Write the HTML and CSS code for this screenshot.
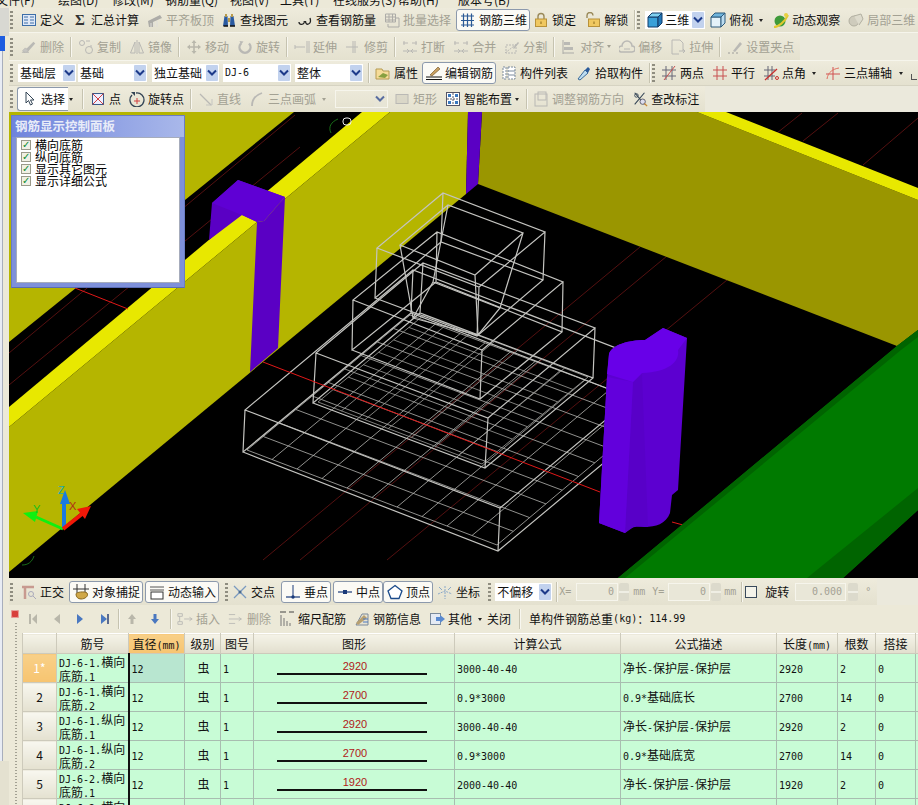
FILE: index.html
```html
<!DOCTYPE html>
<html lang="zh">
<head>
<meta charset="utf-8">
<title>钢筋三维</title>
<link rel="stylesheet" href="styles.css">
</head>
<body>
<svg class="defs" aria-hidden="true">
  <symbol id="i-def" viewBox="0 0 16 16"><rect x="1.500" y="2.500" width="13" height="11" fill="#dfe8f6" stroke="#3c6ea8"/><path d="M3 5h4M3 8h4M3 11h4M9 5h4M9 8h4M9 11h4" stroke="#3c6ea8"/></symbol>
  <symbol id="i-plate" viewBox="0 0 16 16"><path d="M1 9 13 3l2 3-9 4v5H2z" fill="#999"/><path d="M4 15v-4M7 15v-5M10 15V9" stroke="#ddd"/></symbol>
  <symbol id="i-bino" viewBox="0 0 16 16"><path d="M2 14 3.500 4h3l.5 10zM9 14l.5-10h3l1.500 10z" fill="#2a5aa0"/><path d="M4 2h2v3H4zM10 2h2v3h-2zM7 6h2v4H7z" fill="#b89a4a"/><path d="M2.500 14H7M9 14h5" stroke="#111" stroke-width="1.500"/></symbol>
  <symbol id="i-glass" viewBox="0 0 16 16"><path d="M2 10c0 3 4 3 5 1 .3-.8.3-1.500.3-2M8.500 9c0 2 1 4 3 3 2-.8 2.500-3 1.500-6" fill="none" stroke="#222" stroke-width="1.300"/></symbol>
  <symbol id="i-batch" viewBox="0 0 16 16"><path d="M1.500 2h10v8h-10zM1.500 5h10M1.500 8h10M5 2v8M8.500 2v8M12 6h3v9H4v-3" fill="none" stroke="#999"/></symbol>
  <symbol id="i-bar3d" viewBox="0 0 16 16"><path d="M1 4h13M1 8.500h13M1 13h13M3.500 1.500v13.500M7.500 1.500v13.500M11.500 1.500v13.500" fill="none" stroke="#2c5a96" stroke-width="1.200"/></symbol>
  <symbol id="i-lock" viewBox="0 0 16 16"><path d="M5 7V4.500a3 3 0 0 1 6 0V7" fill="none" stroke="#9a8a5a" stroke-width="1.400"/><rect x="2.500" y="7" width="11" height="7.500" fill="#f0c860" stroke="#b8923a"/><path d="M8 9.500v2.500" stroke="#8a6a1a"/></symbol>
  <symbol id="i-unlock" viewBox="0 0 16 16"><path d="M2 6V3.500a3 3 0 0 1 6 0" fill="none" stroke="#9a8a5a" stroke-width="1.400"/><rect x="3.500" y="7" width="11" height="7.500" fill="#f0c860" stroke="#b8923a"/><path d="M9 9.500v2.500" stroke="#8a6a1a"/></symbol>
  <symbol id="i-cube" viewBox="0 0 16 16"><path d="M1 5h10v10H1z" fill="#3aa0d8" stroke="#123a68"/><path d="M1 5l4-4h10l-4 4z" fill="#7fd0f0" stroke="#123a68"/><path d="M11 5l4-4v10l-4 4z" fill="#2278b8" stroke="#123a68"/></symbol>
  <symbol id="i-cubeo" viewBox="0 0 16 16"><path d="M1 5h10v10H1z" fill="#e4f2fa" stroke="#2c5a7c"/><path d="M1 5l4-4h10l-4 4z" fill="#6fb4dc" stroke="#2c5a7c"/><path d="M11 5l4-4v10l-4 4z" fill="#bcdcf0" stroke="#2c5a7c"/></symbol>
  <symbol id="i-orbit" viewBox="0 0 16 16"><circle cx="7" cy="9" r="5.500" fill="#3f9a3a"/><path d="M1 15c4 0 11-5 14-12" fill="none" stroke="#e0c830" stroke-width="2"/><circle cx="13" cy="3" r="2" fill="#e8d040"/></symbol>
  <symbol id="i-local" viewBox="0 0 16 16"><circle cx="6" cy="9" r="5" fill="#c6c3b4" stroke="#a09e90"/><path d="M6 4l7-2 2 5-4 6" fill="#dad8ca" stroke="#a09e90"/></symbol>
  <symbol id="i-erase" viewBox="0 0 18 16"><path d="M5 11 14 2l2 2-8 9z" fill="#aaa"/><path d="M1 14h4M6 14h3M2 12l3-3 3 3-1 2H3z" fill="#bbb" stroke="#aaa"/></symbol>
  <symbol id="i-copy" viewBox="0 0 16 16"><circle cx="4" cy="4" r="2.500" fill="none" stroke="#aaa"/><circle cx="11" cy="11" r="3.500" fill="none" stroke="#aaa"/><path d="M8 2h4M13 6v2" stroke="#aaa"/></symbol>
  <symbol id="i-mirror" viewBox="0 0 16 16"><path d="M6 3 1.500 14H6zM10 3l4.500 11H10z" fill="none" stroke="#aaa"/><path d="M8 1v14" stroke="#aaa"/></symbol>
  <symbol id="i-move" viewBox="0 0 16 16"><path d="M8 1 5.500 4h1.700v3.200H4V5.500L1 8l3 2.500V8.800h3.200V12H5.500L8 15l2.500-3H8.800V8.800H12v1.700L15 8l-3-2.500v1.700H8.800V4h1.700z" fill="#a9a89e"/></symbol>
  <symbol id="i-rot" viewBox="0 0 16 16"><path d="M4 4.500a5.500 5.500 0 1 0 8 0" fill="none" stroke="#aaa" stroke-width="2.400"/><path d="M2.500 2l4 .5-2.500 3z" fill="#aaa"/></symbol>
  <symbol id="i-ext" viewBox="0 0 16 16"><path d="M1 8h10M1 6v4M13 2v12M15 2v12" fill="none" stroke="#aaa"/></symbol>
  <symbol id="i-trim" viewBox="0 0 16 16"><path d="M1 8h12M8 2v12M10 2v12" fill="none" stroke="#aaa"/></symbol>
  <symbol id="i-break" viewBox="0 0 16 16"><path d="M1 4h5M10 4h5M1 12h14M2 2v4M14 2v4M5 10l2 2-2 2M11 10l-2 2 2 2" fill="none" stroke="#aaa"/></symbol>
  <symbol id="i-split" viewBox="0 0 16 16"><path d="M1 14 14 4M2 6h10v8H2z" fill="none" stroke="#aaa" stroke-dasharray="2 1"/><path d="M9 9l5-6 1 1-5 6z" fill="#aaa"/></symbol>
  <symbol id="i-align" viewBox="0 0 16 16"><path d="M2 1v14M2 14h11" stroke="#999"/><path d="M3 3h6v3H3zM3 8h9v3H3z" fill="#aaa"/></symbol>
  <symbol id="i-offset" viewBox="0 0 16 16"><path d="M2 13a3 3 0 0 1 1-6 5 5 0 0 1 10 0 3 3 0 0 1 0 6z" fill="none" stroke="#aaa" stroke-width="1.500"/><path d="M5 10h6" stroke="#aaa"/></symbol>
  <symbol id="i-stretch" viewBox="0 0 16 16"><path d="M2 1h8l3 3v8M2 1v14h7" fill="none" stroke="#aaa"/><path d="M9 12h6M13 10l2 2-2 2" fill="none" stroke="#aaa"/></symbol>
  <symbol id="i-grip" viewBox="0 0 16 16"><path d="M6 12 13 3l2 2-7 8z" fill="#aaa"/><path d="M1 14h2M5 14h2M9 14h2" stroke="#888"/></symbol>
  <symbol id="i-attr" viewBox="0 0 16 16"><path d="M1 4h6l1 2h6v8H1z" fill="#f6dc98" stroke="#b59a50"/><path d="M3 12 8 8l5 2-3 3z" fill="#88a040"/></symbol>
  <symbol id="i-edit" viewBox="0 0 16 16"><path d="M4 10 12 2l2 2-8 7z" fill="#c8a060" stroke="#6a4a20" stroke-width=".6"/><path d="M0 12h16M0 14.500h16" stroke="#111" stroke-width="1.200"/></symbol>
  <symbol id="i-list" viewBox="0 0 16 16"><path d="M2 2h3v12H2zM7 2h7v12H7z" fill="#fff" stroke="#7a8a9c" stroke-dasharray="2 1"/><path d="M7 6h7M7 10h7" stroke="#7a8a9c"/></symbol>
  <symbol id="i-pick" viewBox="0 0 16 16"><path d="M2 14 9 5l3 3-8 7z" fill="#bcdcf0" stroke="#3a6a9a"/><path d="M9 5l3-3 2 2-2 4z" fill="#2a5a9a"/></symbol>
  <symbol id="i-two" viewBox="0 0 16 16"><path d="M1 5h14M1 11h14M5 1v14M11 1v14" stroke="#667" fill="none"/><path d="M3 15 14 1" stroke="#c85050"/></symbol>
  <symbol id="i-par" viewBox="0 0 16 16"><path d="M1 5h14M1 11h14M5 1v14M11 1v14" stroke="#c85050" fill="none"/></symbol>
  <symbol id="i-ang" viewBox="0 0 16 16"><path d="M1 5h11M1 11h11M5 1v14M9 1v14" stroke="#667" fill="none"/><path d="M2 15 14 4" stroke="#c83030" stroke-width="1.300"/><circle cx="14" cy="13" r="1.500" fill="none" stroke="#c83030"/></symbol>
  <symbol id="i-tri" viewBox="0 0 16 16"><path d="M1 9h14M8 2v13" stroke="#d05050" fill="none"/><path d="M2 14C3 7 8 4 14 3" stroke="#e07060" fill="none"/></symbol>
  <symbol id="i-cursor" viewBox="0 0 16 16"><path d="M4 1v11l2.500-2.500L8.500 14l2-1-2-4h3.500z" fill="#fff" stroke="#345"/></symbol>
  <symbol id="i-point" viewBox="0 0 16 16"><rect x="2.500" y="2.500" width="11" height="11" fill="#eef" stroke="#3a5a8a"/><path d="M2.500 2.500l11 11M13.500 2.500l-11 11" stroke="#d04040"/></symbol>
  <symbol id="i-rpt" viewBox="0 0 16 16"><path d="M3 4a7 7 0 1 0 4-2" fill="none" stroke="#345" stroke-width="1.300"/><path d="M2 1h4v4z" fill="#345"/><path d="M8 7v6M5 10h6" stroke="#d04040"/></symbol>
  <symbol id="i-line" viewBox="0 0 16 16"><path d="M2 3l11 11" stroke="#aaa" stroke-width="1.300"/><path d="M14 8v6H8" stroke="#bbb" fill="none"/></symbol>
  <symbol id="i-arc" viewBox="0 0 16 16"><path d="M3 15C3 8 7 4 13 2" fill="none" stroke="#aaa" stroke-width="1.800"/></symbol>
  <symbol id="i-rect" viewBox="0 0 16 16"><rect x="2" y="3.500" width="12" height="9" fill="#d6d3c4" stroke="#aaa"/></symbol>
  <symbol id="i-smart" viewBox="0 0 16 16"><rect x="1.500" y="1.500" width="13" height="13" fill="#fff" stroke="#556"/><path d="M8 2v12M2 8h12" stroke="#556" stroke-dasharray="2 1"/><path d="M3 3h3v3H3zM10 3h3v3h-3zM3 10h3v3H3zM10 10h3v3h-3z" fill="#3a78c0"/></symbol>
  <symbol id="i-adj" viewBox="0 0 16 16"><rect x="2" y="3" width="12" height="12" fill="none" stroke="#aaa"/><rect x="5" y="1" width="8" height="8" fill="none" stroke="#aaa"/></symbol>
  <symbol id="i-check" viewBox="0 0 18 18"><path d="M3 2 14 15M14 2 3 15" stroke="#345" stroke-width="1.200"/><circle cx="5" cy="5" r="2" fill="none" stroke="#345"/><circle cx="12" cy="12" r="3" fill="#dde" stroke="#556"/><path d="M14 14l3 3" stroke="#c83" stroke-width="1.500"/></symbol>
  <symbol id="i-ortho" viewBox="0 0 16 16"><path d="M1 3h12M4 3v12" stroke="#c89a90" stroke-width="2.500" fill="none"/><circle cx="10" cy="10" r="2.500" fill="none" stroke="#aab"/><path d="M12 12l3 3" stroke="#aab"/></symbol>
  <symbol id="i-snap" viewBox="0 0 16 16"><path d="M4 0v9M12 0v9M0 5h16" stroke="#333"/><path d="M3 10c0-2 9-3 11-1 2 3-2 6-6 6-3 0-5-2-5-5z" fill="#d0a848" stroke="#8a6a20"/></symbol>
  <symbol id="i-dyn" viewBox="0 0 16 16"><path d="M1 3h14M1 6h14" stroke="#555"/><rect x="2" y="8" width="12" height="7" fill="#fff" stroke="#333"/></symbol>
  <symbol id="i-cross" viewBox="0 0 16 16"><path d="M2 2l12 12M14 2 2 14" stroke="#7a9ac0" stroke-width="1.300"/><circle cx="8" cy="8" r="1.500" fill="#4a6a90"/></symbol>
  <symbol id="i-perp" viewBox="0 0 16 16"><path d="M1 13h14" stroke="#1a3a7a" stroke-width="1.200"/><path d="M8 1v12" stroke="#1a3a7a"/><circle cx="8" cy="13" r="1.700" fill="#1a3a7a"/></symbol>
  <symbol id="i-mid" viewBox="0 0 16 16"><path d="M1 8h14" stroke="#1a3a7a" stroke-width="1.200"/><rect x="6" y="6" width="4" height="4" fill="#1a3a7a"/></symbol>
  <symbol id="i-vert" viewBox="0 0 16 16"><path d="M8 1.500 15 7l-3 7.500H4L1 7z" fill="#fff" stroke="#1a4a8a" stroke-width="1.300"/></symbol>
  <symbol id="i-coord" viewBox="0 0 16 16"><path d="M8 2v13M1 10l7-3 7 3" stroke="#8aa8c8" stroke-dasharray="2 1" fill="none"/><path d="M2 3l3 3M14 3l-3 3" stroke="#8aa8c8"/></symbol>
  <symbol id="i-first" viewBox="0 0 16 16"><path d="M4 3h2v10H4z" fill="#b9b7aa"/><path d="M12 3v10L7 8z" fill="#b9b7aa"/></symbol>
  <symbol id="i-prev" viewBox="0 0 16 16"><path d="M11 3v10L5 8z" fill="#b9b7aa"/></symbol>
  <symbol id="i-next" viewBox="0 0 16 16"><path d="M5 3v10l6-5z" fill="#4a78c0"/></symbol>
  <symbol id="i-last" viewBox="0 0 16 16"><path d="M4 3v10l6-5z" fill="#4a78c0"/><path d="M10 3h2v10h-2z" fill="#5a6a90"/></symbol>
  <symbol id="i-up" viewBox="0 0 16 16"><path d="M8 3 4 8h2.500v5h3V8H12z" fill="#b9b7aa"/></symbol>
  <symbol id="i-down" viewBox="0 0 16 16"><path d="M8 13 4 8h2.500V3h3v5H12z" fill="#4a78c0"/></symbol>
  <symbol id="i-ins" viewBox="0 0 18 16"><path d="M1 2h5v3H1zM1 11h5v3H1z" fill="none" stroke="#aaa"/><path d="M8 8h9M14 6l3 2-3 2" stroke="#aaa" fill="none"/><path d="M3 5v6" stroke="#aaa"/></symbol>
  <symbol id="i-del" viewBox="0 0 18 16"><path d="M1 3h7M1 8h14M1 13h7M12 6l3 2-3 2" stroke="#aaa" fill="none"/></symbol>
  <symbol id="i-scale" viewBox="0 0 16 16"><path d="M1 1h6M10 1h5" stroke="#444"/><path d="M2 4v11M5 7v8M8 10v5M11 12v3" stroke="#777"/></symbol>
  <symbol id="i-info" viewBox="0 0 16 16"><path d="M2 14 8 3h6v11z" fill="#e8e4d4" stroke="#7a8a9c"/><path d="M2 12 10 4l3 3-9 7z" fill="#b8a070"/><path d="M9 8h5M9 11h5" stroke="#4a78c0"/></symbol>
  <symbol id="i-other" viewBox="0 0 16 16"><rect x="1.500" y="2.500" width="10" height="11" fill="#e4eaf4" stroke="#7a8a9c"/><path d="M7 6h4V4l5 4-5 4v-2H7z" fill="#5a8ad0"/></symbol>
  <symbol id="i-chev" viewBox="0 0 10 8"><path d="M1 1.500 5 5.500 9 1.500" fill="none" stroke="#1c3a8a" stroke-width="2"/></symbol>
</svg>

<div class="menubar">
  <span class="mi one">文件(F)</span><span class="mi two">绘图(D)</span><span class="mi three">修改(M)</span><span class="mi four">钢筋量(Q)</span><span class="mi five">视图(V)</span><span class="mi six">工具(T)</span><span class="mi seven">在线服务(S)</span><span class="mi eight">帮助(H)</span><span class="mi nine">版本号(B)</span>
</div>

<div class="shell">
  <aside class="side">
    <div class="side-top"></div>
    <div class="side-sel"></div>
    <div class="side-list"></div>
    <div class="side-foot"></div>
  </aside>
  <main class="work">
    <div class="tb r1">
      <i class="grip"></i>
      <span class="t ml8"><svg class="ic"><use href="#i-def"/></svg>定义</span>
      <span class="t ml8"><b class="sig">Σ</b>汇总计算</span>
      <span class="t ml8 off"><svg class="ic"><use href="#i-plate"/></svg>平齐板顶</span>
      <span class="t ml7"><svg class="ic"><use href="#i-bino"/></svg>查找图元</span>
      <span class="t ml9"><svg class="ic"><use href="#i-glass"/></svg>查看钢筋量</span>
      <span class="t ml8 off"><svg class="ic"><use href="#i-batch"/></svg>批量选择</span>
      <span class="t btn ml5"><svg class="ic"><use href="#i-bar3d"/></svg>钢筋三维</span>
      <span class="t ml3"><svg class="ic"><use href="#i-lock"/></svg>锁定</span>
      <span class="t ml9"><svg class="ic"><use href="#i-unlock"/></svg>解锁</span>
      <i class="sep ml6"></i>
      <i class="grip ml2"></i>
      <span class="combo w60 ml5"><svg class="ic"><use href="#i-cube"/></svg><span class="ctext tight">三维</span><span class="ca"><svg class="chev"><use href="#i-chev"/></svg></span></span>
      <span class="t ml5"><svg class="ic"><use href="#i-cubeo"/></svg>俯视</span><i class="ar ml6"></i>
      <span class="t ml10"><svg class="ic"><use href="#i-orbit"/></svg>动态观察</span>
      <span class="t ml8 off"><svg class="ic"><use href="#i-local"/></svg>局部三维</span>
    </div>

    <div class="tb r2 fit">
      <i class="grip"></i>
      <span class="t ml8 off"><svg class="ic"><use href="#i-erase"/></svg>删除</span>
      <i class="sep ml6"></i>
      <span class="t ml7 off"><svg class="ic"><use href="#i-copy"/></svg>复制</span>
      <span class="t ml8 off"><svg class="ic"><use href="#i-mirror"/></svg>镜像</span>
      <i class="sep ml6"></i>
      <span class="t ml7 off"><svg class="ic"><use href="#i-move"/></svg>移动</span>
      <span class="t ml8 off"><svg class="ic"><use href="#i-rot"/></svg>旋转</span>
      <i class="sep ml6"></i>
      <span class="t ml7 off"><svg class="ic"><use href="#i-ext"/></svg>延伸</span>
      <span class="t ml8 off"><svg class="ic"><use href="#i-trim"/></svg>修剪</span>
      <i class="sep ml6"></i>
      <span class="t ml7 off"><svg class="ic"><use href="#i-break"/></svg>打断</span>
      <span class="t ml8 off"><svg class="ic"><use href="#i-break"/></svg>合并</span>
      <span class="t ml8 off"><svg class="ic"><use href="#i-split"/></svg>分割</span>
      <i class="sep ml6"></i>
      <span class="t ml7 off"><svg class="ic"><use href="#i-align"/></svg>对齐</span><i class="ar off-ar ml3"></i>
      <span class="t ml8 off"><svg class="ic"><use href="#i-offset"/></svg>偏移</span>
      <span class="t ml8 off"><svg class="ic"><use href="#i-stretch"/></svg>拉伸</span>
      <i class="sep ml6"></i>
      <span class="t ml7 off"><svg class="ic"><use href="#i-grip"/></svg>设置夹点</span>
    </div>

    <div class="tb r3">
      <i class="grip"></i>
      <span class="combo w58 ml5"><span class="ctext">基础层</span><span class="ca"><svg class="chev"><use href="#i-chev"/></svg></span></span>
      <span class="combo w69 ml2"><span class="ctext">基础</span><span class="ca"><svg class="chev"><use href="#i-chev"/></svg></span></span>
      <span class="combo w67 ml5"><span class="ctext">独立基础</span><span class="ca"><svg class="chev"><use href="#i-chev"/></svg></span></span>
      <span class="combo w68 ml4"><span class="ctext m">DJ-6</span><span class="ca"><svg class="chev"><use href="#i-chev"/></svg></span></span>
      <span class="combo w68 ml4"><span class="ctext">整体</span><span class="ca"><svg class="chev"><use href="#i-chev"/></svg></span></span>
      <i class="sep ml5"></i>
      <span class="t ml6"><svg class="ic"><use href="#i-attr"/></svg>属性</span>
      <span class="t btn ml4"><svg class="ic"><use href="#i-edit"/></svg>编辑钢筋</span>
      <span class="t ml5"><svg class="ic"><use href="#i-list"/></svg>构件列表</span>
      <span class="t ml8"><svg class="ic"><use href="#i-pick"/></svg>拾取构件</span>
      <i class="sep ml6"></i>
      <i class="grip ml2"></i>
      <span class="t ml6"><svg class="ic"><use href="#i-two"/></svg>两点</span>
      <span class="t ml8"><svg class="ic"><use href="#i-par"/></svg>平行</span>
      <span class="t ml8"><svg class="ic"><use href="#i-ang"/></svg>点角</span><i class="ar ml6"></i>
      <span class="t ml9"><svg class="ic"><use href="#i-tri"/></svg>三点辅轴</span><i class="ar ml7"></i>
      <i class="more ml8"></i>
    </div>

    <div class="tb r4 fit">
      <i class="grip"></i>
      <span class="t btn sel ml4"><svg class="ic"><use href="#i-cursor"/></svg>选择</span><i class="ar ml1"></i>
      <i class="sep ml9"></i>
      <span class="t ml7"><svg class="ic"><use href="#i-point"/></svg>点</span>
      <span class="t ml8"><svg class="ic"><use href="#i-rpt"/></svg>旋转点</span>
      <i class="sep ml6"></i>
      <span class="t ml7 off"><svg class="ic"><use href="#i-line"/></svg>直线</span>
      <span class="t ml8 off"><svg class="ic"><use href="#i-arc"/></svg>三点画弧</span><i class="ar off-ar ml6"></i>
      <span class="combo w53 ghost ml9"><span class="ctext"></span><span class="ca"><svg class="chev"><use href="#i-chev"/></svg></span></span>
      <span class="t ml6 off"><svg class="ic"><use href="#i-rect"/></svg>矩形</span>
      <span class="t ml8"><svg class="ic"><use href="#i-smart"/></svg>智能布置</span><i class="ar ml3"></i>
      <i class="sep ml7"></i>
      <span class="t ml6 off"><svg class="ic"><use href="#i-adj"/></svg>调整钢筋方向</span>
      <span class="t ml8"><svg class="ic"><use href="#i-check"/></svg>查改标注</span>
    </div>

    <section class="view">
      <svg class="scene" viewBox="9 112 909 466" width="909" height="466" aria-hidden="true">
        <rect class="black" x="9" y="112" width="909" height="466"/>
        <g class="redthin">
          <path d="M9 353 295 115M9 385 300 147M263 560 640 247M300 560 667 256M387 560 727 280M802 113 777 133M838 113 803 141M918 118 863 165"/>
        </g>
        <path class="olive" d="M9 112H294L9 342z"/>
        <path class="yellow" d="M9 407 362 112H390L9 427z"/>
        <path class="olive" d="M9 427 390 112H468L466 194 9 572z"/>
        <path class="olived" d="M482 112H697L918 200V330L897 346 478 184z"/>
        <path class="yellow" d="M697 112H726L918 188V200z"/>
        <path class="pur" d="M468 112H482L478 184 466 194z"/>
        <path class="pur" d="M212 203 209 240 242 215 257 222 285 197 238 180z"/>
        <path class="purl" d="M238 180 285 197 264 221 257 222 242 215 212 203z"/>
        <path class="pur" d="M257 222 264 221 285 197 278 348 250 372z"/>

        <g class="mesh">
          <path d="M272 459.500 435 324.300M297 469 460 333.600M322 478.500 485 342.900M347 488 510 352.200M372 497.500 535 361.500M397 507 560 370.800M422 516.500 585 380.100M447 526 610 389.400M472 535.500 635 398.700"/>
          <path d="M263.300 436.500 513.300 531.300M279.600 423 529.600 517.600M295.900 409.500 545.900 503.900M312.200 396 562.200 490.200M328.500 382.500 578.500 476.500M344.800 369 594.800 462.800M361.100 355.500 611.100 449.100M377.400 342 627.400 435.400M393.700 328.500 643.700 421.700"/>
          <path d="M247 450 497 545 660 408 410 315z"/>
        </g>
        <g class="mesh mesh2">
          <path d="M341.400 410.900 447.400 323.900M364.900 419.700 470.900 332.700M388.300 428.600 494.300 341.600M411.700 437.400 517.700 350.400M435.100 446.300 541.100 359.300M458.600 455.100 564.600 368.100"/>
          <path d="M333.100 389.600 497.100 451.600M348.300 377.100 512.300 439.100M363.400 364.700 527.400 426.700M378.600 352.300 542.600 414.300M393.700 339.900 557.700 401.900M408.900 327.400 572.900 389.400"/>
          <path d="M318 402 482 464 588 377 424 315z"/>
        </g>
        <g class="wire">
          <path d="M245 410 500 508 668 368 413 270zM243 452 498 551 666 411 411 313zM245 410 243 452M500 508 498 551M413 270 411 313"/>
          <path d="M316 353 488 418 595 328 423 263zM313 403 485 468 593 378 420 313zM316 353 313 403M488 418 485 468M595 328 593 378M423 263 420 313"/>
          <path d="M353 300 482 350 563 282 437 232zM352 350 480 399 562 332 436 282zM353 300 352 350M482 350 480 399M563 282 562 332M437 232 436 282"/>
          <path d="M377 248 479 287 545 232 443 193zM375 298 477 336 543 280 441 242zM377 248 375 298M479 287 477 336M545 232 543 280M443 193 441 242"/>
          <path d="M400 245 475 275 523 233 448 205zM413 318 478 335 500 308 433 282zM400 245 413 318M475 275 478 335M523 233 500 308M448 205 433 282"/>
        </g>
        <path class="redaxis" d="M263 362 600 492M672 522 683 525M75 288 128 309"/>

        <path class="gr" d="M897 346 918 330V510L843 578H618z"/>
        <path class="grd" d="M897 346 918 330V337L901 350 625 578H618z"/>
        <path class="grd" d="M918 488V510L843 578H807z"/>

        <path class="pur2" d="M607 377 609 354C612 345 628 340 645 340L663 328 687 338 678 490 672 495 670 513C666 524 655 527 645 527 637 527 633 525 625 533L599 523z"/>
        <path class="pur3" d="M633 382 642 374 648 527 635 526 625 533z"/>
        <path class="pur4" d="M607 377 633 382 625 533 599 523z"/>
        <path class="purt" d="M609 354C612 345 628 340 645 340L663 328 687 338 678 350C680 362 668 372 642 373L633 382 607 374z"/>

        <g class="gizmo">
          <path class="gz" d="M64 529V498"/><path class="gzh" d="M65 490 70 504H60z"/>
          <path class="gg" d="M63 529 36 517"/><path class="ggh" d="M23 513 38 511 35 522z"/>
          <path class="gr2" d="M63 529 82 514"/><path class="grh" d="M91 506 77 509 85 519z"/>
        </g>
        <text class="lab lz" x="58" y="494">Z</text>
        <text class="lab ly" x="33" y="513">Y</text>
        <text class="lab lx" x="69" y="510">X</text>
        <path class="arcg" d="M22 565c6 0 10-3 12-9M331 133c-3-6 0-11 7-14"/>
        <rect class="oval" x="343" y="118" width="8" height="7" rx="3"/>
      </svg>

      <div class="cpanel">
        <h2 class="cp-title">钢筋显示控制面板</h2>
        <div class="cp-body">
          <label class="cp-row"><span class="cb">✓</span>横向底筋</label>
          <label class="cp-row"><span class="cb">✓</span>纵向底筋</label>
          <label class="cp-row"><span class="cb">✓</span>显示其它图元</label>
          <label class="cp-row"><span class="cb">✓</span>显示详细公式</label>
        </div>
      </div>
    </section>

    <div class="tb snap fit">
      <i class="grip"></i>
      <span class="t ml8"><svg class="ic"><use href="#i-ortho"/></svg>正交</span>
      <span class="t btn ml5"><svg class="ic"><use href="#i-snap"/></svg>对象捕捉</span>
      <span class="t btn ml2"><svg class="ic"><use href="#i-dyn"/></svg>动态输入</span>
      <i class="grip ml6"></i>
      <span class="t ml4"><svg class="ic"><use href="#i-cross"/></svg>交点</span>
      <span class="t btn ml6"><svg class="ic"><use href="#i-perp"/></svg>垂点</span>
      <span class="t btn ml2"><svg class="ic"><use href="#i-mid"/></svg>中点</span>
      <span class="t btn"><svg class="ic"><use href="#i-vert"/></svg>顶点</span>
      <span class="t ml4"><svg class="ic"><use href="#i-coord"/></svg>坐标</span>
      <i class="grip ml8"></i>
      <span class="combo w57 ml4"><span class="ctext">不偏移</span><span class="ca"><svg class="chev"><use href="#i-chev"/></svg></span></span>
      <i class="sep ml4"></i>
      <span class="m dim lbl14 ml2">X=</span>
      <span class="num w42 ml3">0</span><i class="spin ml1"></i>
      <span class="m dim lbl12 ml4">mm</span>
      <span class="m dim lbl14 ml7">Y=</span>
      <span class="num w42 ml2">0</span><i class="spin ml1"></i>
      <span class="m dim lbl12 ml3">mm</span>
      <i class="sep ml5"></i>
      <i class="check ml3"></i>
      <span class="t ml8">旋转</span>
      <span class="num w51 ml6">0.000</span><i class="spin ml2"></i>
      <span class="m dim ml7">°</span>
    </div>

    <section class="bottom">
      <div class="rail">
        <i class="close"></i>
        <i class="railgrip"></i>
      </div>
      <div class="bmain">
        <div class="tb tt">
          <svg class="ic ml3"><use href="#i-first"/></svg>
          <svg class="ic ml8"><use href="#i-prev"/></svg>
          <svg class="ic ml7"><use href="#i-next"/></svg>
          <svg class="ic ml9"><use href="#i-last"/></svg>
          <i class="sep ml5"></i>
          <svg class="ic ml5"><use href="#i-up"/></svg>
          <svg class="ic ml7"><use href="#i-down"/></svg>
          <i class="sep ml7"></i>
          <span class="t ml6 off"><svg class="ic"><use href="#i-ins"/></svg>插入</span>
          <span class="t ml8 off"><svg class="ic"><use href="#i-del"/></svg>删除</span>
          <span class="t ml8"><svg class="ic"><use href="#i-scale"/></svg>缩尺配筋</span>
          <span class="t ml8"><svg class="ic"><use href="#i-info"/></svg>钢筋信息</span>
          <span class="t ml8"><svg class="ic"><use href="#i-other"/></svg>其他</span><i class="ar ml6"></i>
          <span class="t ml5">关闭</span>
          <i class="sep ml8"></i>
          <span class="t ml9 total">单构件钢筋总重<span class="m">(kg)</span>：<span class="m">114.99</span></span>
        </div>
        <table class="grid">
          <colgroup>
            <col class="c0"><col class="c1"><col class="c2"><col class="c3"><col class="c4"><col class="c5"><col class="c6"><col class="c7"><col class="c8"><col class="c9"><col class="c10"><col class="c11">
          </colgroup>
          <thead>
            <tr>
              <th></th><th>筋号</th><th class="act">直径<span class="m">(mm)</span></th><th>级别</th><th>图号</th><th>图形</th><th>计算公式</th><th>公式描述</th><th>长度<span class="m">(mm)</span></th><th>根数</th><th>搭接</th><th></th>
            </tr>
          </thead>
          <tbody>
            <tr>
              <th class="rh act cur">1*</th><td><div class="no"><span class="m">DJ-6-1.</span>横向<br>底筋<span class="m">.1</span></div></td><td class="dia cursel"><span class="m">12</span></td><td class="ctr">虫</td><td><span class="m">1</span></td>
              <td><div class="shape"><span class="sv">2920</span><i class="bar"></i></div></td><td><span class="m">3000-40-40</span></td><td>净长<span class="m">-</span>保护层<span class="m">-</span>保护层</td><td><span class="m">2920</span></td><td><span class="m">2</span></td><td><span class="m">0</span></td><td></td>
            </tr>
            <tr>
              <th class="rh">2</th><td><div class="no"><span class="m">DJ-6-1.</span>横向<br>底筋<span class="m">.2</span></div></td><td class="dia"><span class="m">12</span></td><td class="ctr">虫</td><td><span class="m">1</span></td>
              <td><div class="shape"><span class="sv">2700</span><i class="bar"></i></div></td><td><span class="m">0.9*3000</span></td><td><span class="m">0.9*</span>基础底长</td><td><span class="m">2700</span></td><td><span class="m">14</span></td><td><span class="m">0</span></td><td></td>
            </tr>
            <tr>
              <th class="rh">3</th><td><div class="no"><span class="m">DJ-6-1.</span>纵向<br>底筋<span class="m">.1</span></div></td><td class="dia"><span class="m">12</span></td><td class="ctr">虫</td><td><span class="m">1</span></td>
              <td><div class="shape"><span class="sv">2920</span><i class="bar"></i></div></td><td><span class="m">3000-40-40</span></td><td>净长<span class="m">-</span>保护层<span class="m">-</span>保护层</td><td><span class="m">2920</span></td><td><span class="m">2</span></td><td><span class="m">0</span></td><td></td>
            </tr>
            <tr>
              <th class="rh">4</th><td><div class="no"><span class="m">DJ-6-1.</span>纵向<br>底筋<span class="m">.2</span></div></td><td class="dia"><span class="m">12</span></td><td class="ctr">虫</td><td><span class="m">1</span></td>
              <td><div class="shape"><span class="sv">2700</span><i class="bar"></i></div></td><td><span class="m">0.9*3000</span></td><td><span class="m">0.9*</span>基础底宽</td><td><span class="m">2700</span></td><td><span class="m">14</span></td><td><span class="m">0</span></td><td></td>
            </tr>
            <tr>
              <th class="rh">5</th><td><div class="no"><span class="m">DJ-6-2.</span>横向<br>底筋<span class="m">.1</span></div></td><td class="dia"><span class="m">12</span></td><td class="ctr">虫</td><td><span class="m">1</span></td>
              <td><div class="shape"><span class="sv">1920</span><i class="bar"></i></div></td><td><span class="m">2000-40-40</span></td><td>净长<span class="m">-</span>保护层<span class="m">-</span>保护层</td><td><span class="m">1920</span></td><td><span class="m">2</span></td><td><span class="m">0</span></td><td></td>
            </tr>
            <tr>
              <th class="rh"></th><td><div class="no"><span class="m">DJ-6-2.</span>横向<br>底筋<span class="m">.2</span></div></td><td class="dia"></td><td class="ctr"></td><td></td>
              <td></td><td></td><td></td><td></td><td></td><td></td><td></td>
            </tr>
          </tbody>
        </table>
      </div>
    </section>
  </main>
</div>
</body>
</html>
```
FILE: styles.css
```css
* { box-sizing: border-box; }
html, body { margin: 0; height: 100%; }
body {
  width: 918px; height: 805px; overflow: hidden;
  display: flex; flex-direction: column;
  background: #ebe9dc; color: #111;
  font: 12px/14px "Noto Sans CJK SC", "Noto Sans CJK JP", sans-serif;
}
.defs { position: absolute; width: 0; height: 0; }
i { display: block; flex: none; }

.menubar { height: 8px; overflow: hidden; position: relative; display: flex; flex: none; background: #ece9d8; }
.mi { margin-top: -7px; white-space: nowrap; flex: none; height: 14px; }
.one { margin-left: -4px; width: 62px; }
.two { width: 54px; }
.three { width: 53px; }
.four { width: 65px; }
.five { width: 50px; }
.six { width: 53px; }
.seven { width: 65px; }
.eight { width: 60px; }
.nine { width: 80px; }

.shell { flex: 1; display: flex; min-height: 0; }
.side { width: 9px; flex: none; display: flex; flex-direction: column; background: #ece9d8; }
.side-top { height: 28px; background: #d8d8d2; }
.side-sel { height: 15px; width: 5px; background: #1d5ce0; }
.side-list { height: 710px; width: 3px; background: #e8ecf4; border-right: 1px solid #a8aebc; }
.side-foot { flex: 1; background: #e4e1d0; }

.work { flex: 1; min-width: 0; display: flex; flex-direction: column; }

.tb {
  display: flex; align-items: center; flex: none;
  background: linear-gradient(#eeebdc, #e4e1cf);
  white-space: nowrap;
}
.r1 { height: 25px; border-bottom: 1px solid #f6f5ec; }
.r2 { height: 27px; }
.r3 { height: 26px; border-top: 1px solid #f6f5ec; border-bottom: 1px solid #d6d3c2; }
.r4 { height: 26px; }
.snap { height: 27px; padding-right: 9px; }
.fit { width: fit-content; padding-right: 6px; }
.tt { height: 28px; background: #ece9d8; }

.grip {
  width: 3px; height: 18px; margin-left: 1px;
  background: repeating-linear-gradient(#8f8d80 0 2px, transparent 2px 4px);
}
.sep { width: 1px; height: 20px; background: #c6c3b0; box-shadow: 1px 0 #f8f7f0; }
.t { display: inline-flex; align-items: center; gap: 3px; flex: none; }
.off { color: #a3a193; }
.off .ic { opacity: .75; }
.ic { width: 16px; height: 16px; flex: none; display: block; }
.sig { width: 16px; text-align: center; font: bold 15px/16px "Liberation Serif", serif; color: #333; }
.btn {
  height: 22px; padding: 0 2px 0 3px;
  background: #fbfaf5; border: 1px solid #8c99ac; border-radius: 3px;
}
.sel { height: 24px; padding-left: 4px; border-radius: 3px 0 0 3px; border-right: 0; padding-right: 3px; background: #fff; }
.ar {
  width: 0; height: 0; box-sizing: content-box;
  border-left: 2.5px solid transparent; border-right: 2.5px solid transparent; border-top: 3px solid #222;
}
.off-ar { border-top-color: #a3a193; }
.more { width: 6px; height: 6px; border-left: 1px solid #555; border-bottom: 1px solid #555; margin-top: 8px; }

.combo {
  height: 18px; display: flex; align-items: center; justify-content: space-between;
  flex: none; background: #fff; padding-left: 2px; padding-right: 1px;
}
.ctext { flex: 1; }
.tight { margin-left: 2px; }
.ca { width: 12px; height: 16px; background: #c2d2ee; display: flex; align-items: center; justify-content: center; border-radius: 1px; }
.chev { width: 10px; height: 8px; display: block; }
.ghost { background: transparent; border: 1px solid #f6f5ec; }
.ghost .ca { background: #e8e6d8; opacity: .7; }
.w42 { width: 42px; } .w51 { width: 51px; } .w53 { width: 53px; } .w57 { width: 57px; }
.w58 { width: 58px; } .w60 { width: 60px; } .w67 { width: 67px; } .w68 { width: 68px; } .w69 { width: 69px; }

.ml1 { margin-left: 1px; } .ml2 { margin-left: 2px; } .ml3 { margin-left: 3px; } .ml4 { margin-left: 4px; }
.ml5 { margin-left: 5px; } .ml6 { margin-left: 6px; } .ml7 { margin-left: 7px; } .ml8 { margin-left: 8px; }
.ml9 { margin-left: 9px; } .ml10 { margin-left: 10px; }

.m { font: 10px/14px "DejaVu Sans Mono", monospace; }
.dim { color: #a3a193; }
.lbl14 { width: 14px; flex: none; }
.lbl12 { width: 12px; flex: none; }
.num {
  height: 18px; flex: none; padding: 1px 3px 0 0; text-align: right;
  background: #e9e7d8; border: 1px solid #f6f5ec; color: #a3a193;
  font: 10px/14px "DejaVu Sans Mono", monospace;
}
.spin {
  width: 10px; height: 18px;
  background: linear-gradient(#dcdacc 0 45%, #efeee4 45% 55%, #dcdacc 55%);
  border-radius: 2px;
}
.check { width: 12px; height: 12px; background: #f4f3ea; border: 1px solid #3a4a5c; }

.view { flex: 1; min-height: 0; position: relative; overflow: hidden; background: #000; }
.scene { display: block; }
.black { fill: #000; }
.olive { fill: #b5b500; }
.olived { fill: #9a9600; }
.yellow { fill: #e8e800; }
.pur { fill: #5a00c4; }
.purl { fill: #5f00d4; }
.pur2 { fill: #5c00d0; }
.pur3 { fill: #5800c8; }
.pur4 { fill: #6200dc; }
.purt { fill: #6800e8; }
.gr { fill: #007a00; }
.grd { fill: #006400; }
.redthin path { fill: none; stroke: #6a1414; stroke-width: .8; }
.redaxis { fill: none; stroke: #e01818; stroke-width: 1; }
.wire path { fill: none; stroke: #c4c4c0; stroke-width: 1.2; }
.mesh path { fill: none; stroke: #b4b4b0; stroke-width: .8; }
.mesh2 path { stroke: #a0a09c; }
.gz { fill: none; stroke: #1a7ae0; stroke-width: 4; }
.gzh { fill: #1a7ae0; }
.gg { fill: none; stroke: #10f010; stroke-width: 3; }
.ggh { fill: #10f010; }
.gr2 { fill: none; stroke: #f01808; stroke-width: 4; }
.grh { fill: #f01808; }
.lab { font: 11px "Liberation Sans", sans-serif; }
.lz { fill: #18a8a8; }
.ly { fill: #18c018; }
.lx { fill: #b02a18; }
.arcg { fill: none; stroke: #208820; stroke-width: .8; }
.oval { fill: none; stroke: #eee; }

.cpanel {
  position: absolute; left: 2px; top: 3px; width: 174px; height: 173px;
  background: #7e90da; border: 1px solid #6a7cc4; border-bottom-color: #5a6cb4;
  display: flex; flex-direction: column; padding: 0 4px 4px;
}
.cp-title {
  margin: 0; height: 21px; flex: none; margin-left: -4px; margin-right: -4px; padding: 3px 0 0 3px;
  background: linear-gradient(90deg, #6f84dc, #a9b8ea);
  color: #e8ecf8; font: bold 12.500px/14px "Noto Sans CJK SC", sans-serif; white-space: nowrap;
}
.cp-body {
  flex: 1; background: #fff; border: 1px solid #a6acbc; padding: 1px 0 0 4px;
  display: flex; flex-direction: column;
}
.cp-row { height: 12px; display: flex; align-items: center; gap: 4px; line-height: 12px; color: #000; white-space: nowrap; }
.cb {
  width: 10px; height: 10px; flex: none; border: 1px solid #9a9a8a; background: #f0f0e4;
  color: #0a8a30; font: bold 10px/8px "DejaVu Sans", sans-serif; text-align: center;
}

.bottom { height: 200px; flex: none; display: flex; background: #ece9d8; overflow: hidden; }
.rail { width: 13px; flex: none; position: relative; padding: 5px 0 0 2px; display: flex; flex-direction: column; }
.close { width: 8px; height: 8px; background: #d8403c; border-radius: 2px; box-shadow: inset 0 0 0 1px #e8a09c; }
.railgrip {
  width: 2px; flex: 1; margin: 5px 0 0 4px;
  background: repeating-linear-gradient(#a3a193 0 1px, transparent 1px 3px);
}
.bmain { flex: 1; min-width: 0; }
.total { color: #111; gap: 0; }

.grid {
  border-collapse: collapse; table-layout: fixed; width: 896px;
  border-top: 1px solid #fff; background: #c8fcd6; color: #111;
}
.c0 { width: 34px; } .c1 { width: 72px; } .c2 { width: 56px; } .c3 { width: 36px; } .c4 { width: 33px; }
.c5 { width: 201px; } .c6 { width: 166px; } .c7 { width: 156px; } .c8 { width: 61px; } .c9 { width: 38px; }
.c10 { width: 40px; } .c11 { width: 3px; }
.grid thead tr { height: 20px; }
.grid tbody tr { height: 29px; }
.grid th {
  font-weight: 400; padding: 0; text-align: center; overflow: hidden; white-space: nowrap;
  background: linear-gradient(#f5f3e8, #e2dfce);
  border: 1px solid #cdcabb; border-top: 0; height: 20px; line-height: 14px;
}
.grid td {
  padding: 0 0 0 2px; border: 1px solid #a8bdb0; overflow: hidden; white-space: nowrap; height: 29px;
  font-size: 12px; line-height: 14px;
}
.grid .act { background: linear-gradient(#f8d088, #f7c470); }
.grid .cur { color: #fff; }
.grid .rh { background: linear-gradient(#f8f7ef, #e4e1d0); height: 29px; }
.grid .rh.act { background: linear-gradient(#f8d088, #f7c470); }
.grid .m { line-height: 10px; }
.no { height: 27px; overflow: hidden; line-height: 13px; }
.no .m { vertical-align: baseline; }
.grid .dia { border-left: 2px solid #111; }
.grid .cursel { background: #b8e6d0; }
.ctr { text-align: center; }
.grid td.no-pad { padding: 0; }
.shape { height: 27px; display: flex; flex-direction: column; align-items: center; justify-content: flex-start; padding-top: 5px; overflow: hidden; }
.sv { font: 11px/12px "Liberation Sans", sans-serif; color: #b01818; }
.bar { width: 150px; height: 2px; background: #111; margin: 1px 0 0 -6px; }
```
